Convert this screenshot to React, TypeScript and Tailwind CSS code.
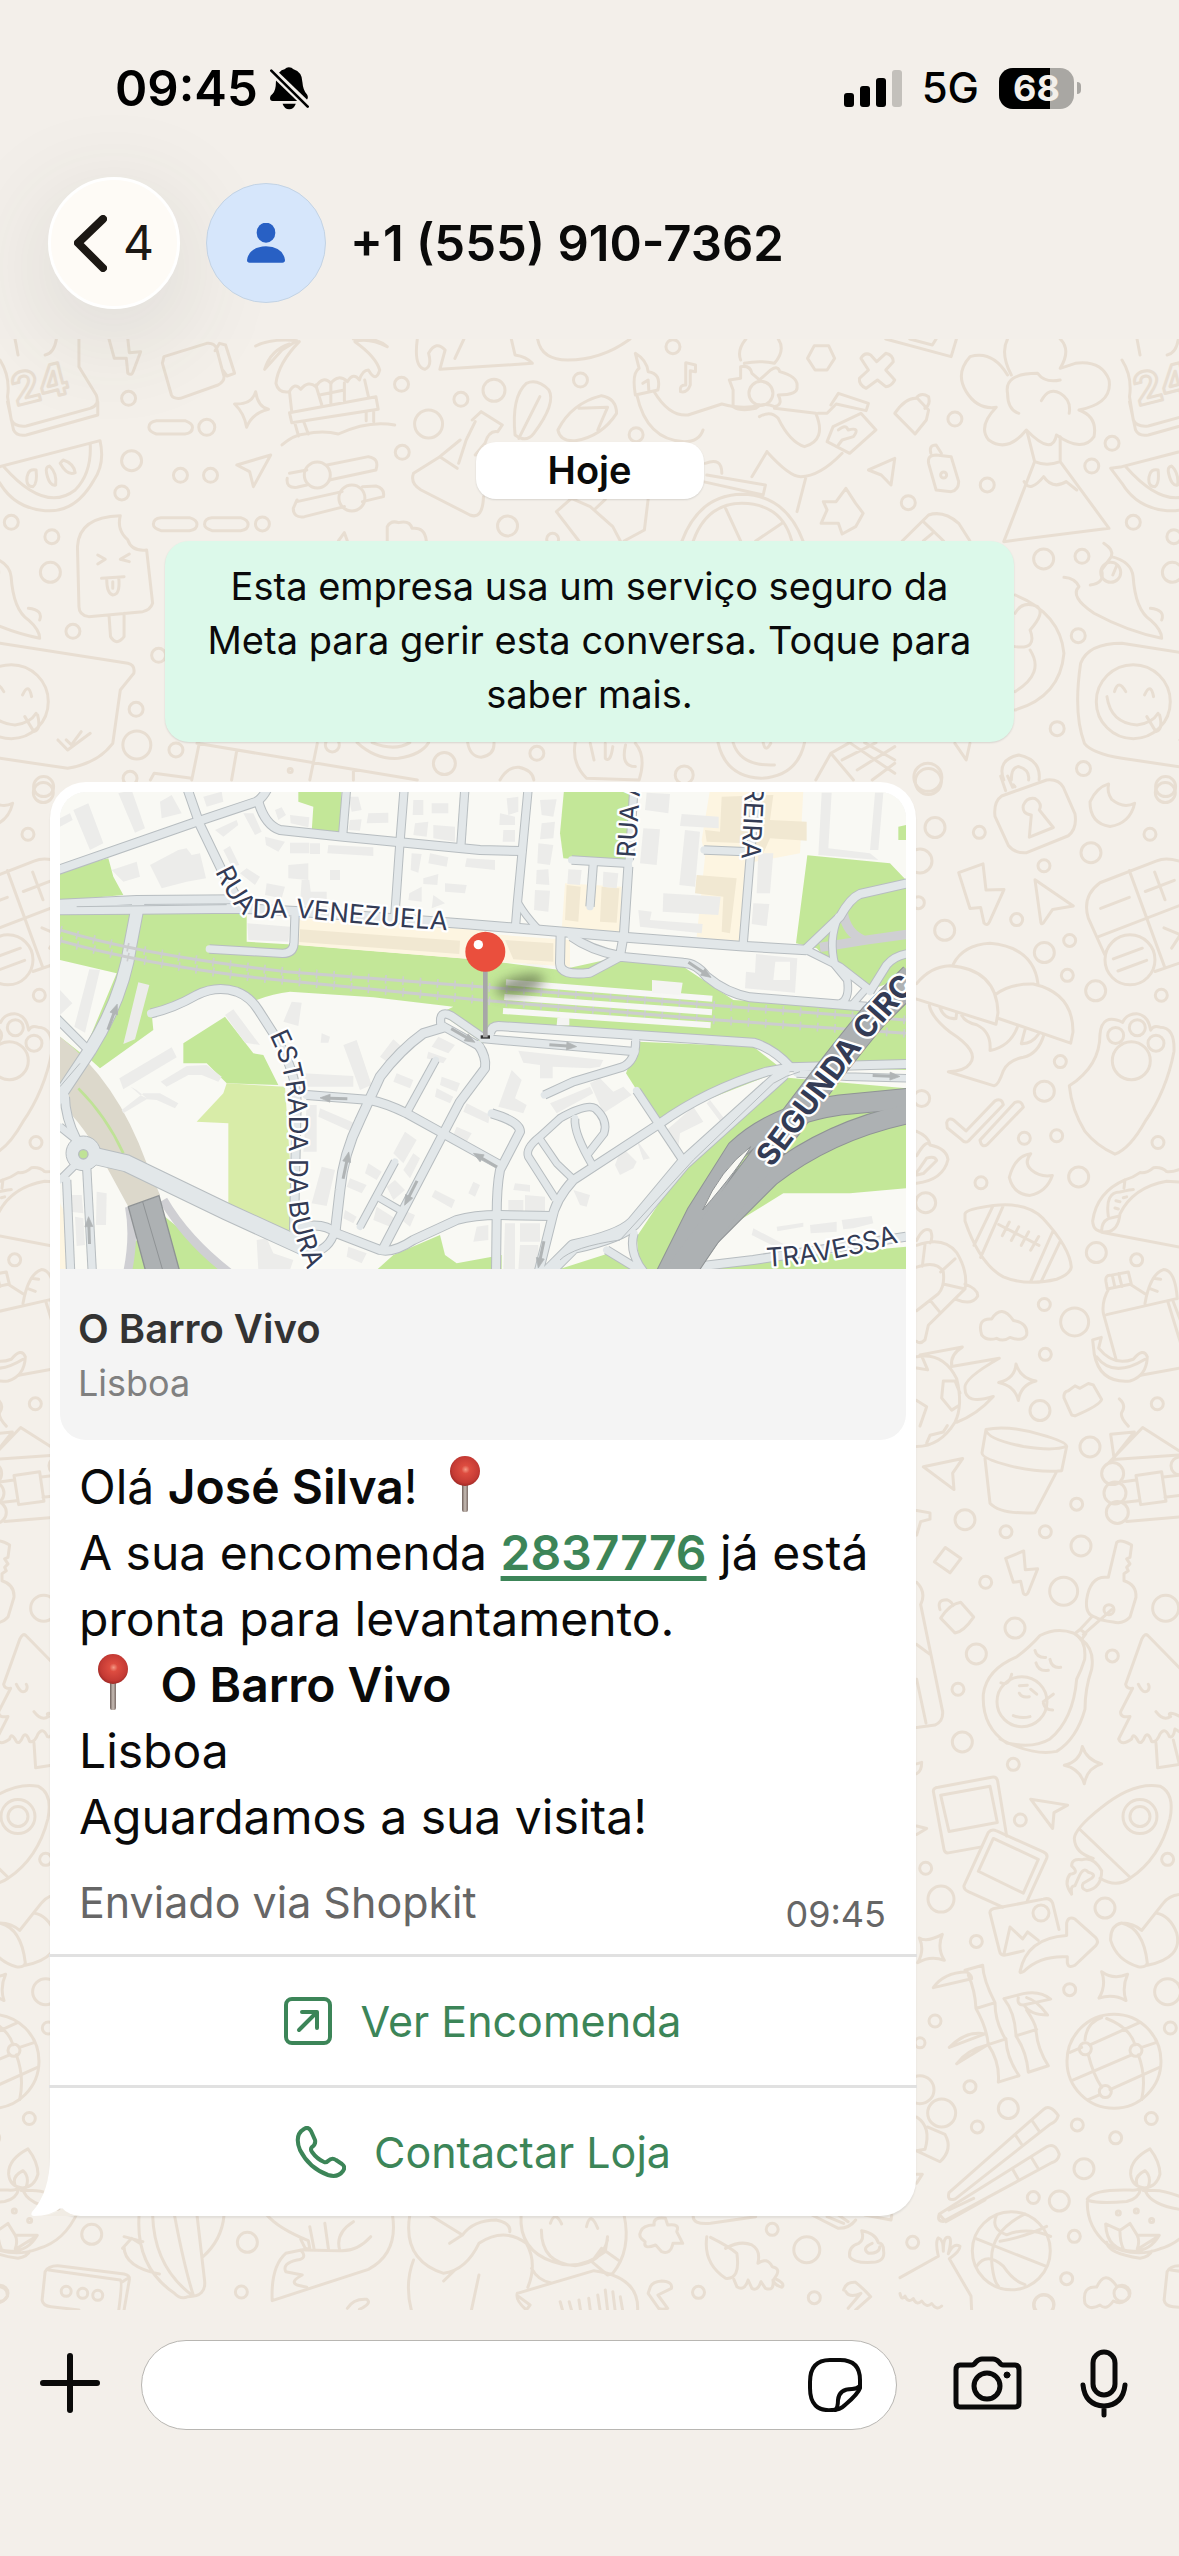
import React from "react";

type Dot = [number, number, number];

type PanelProps = {
  x: number;
  y: number;
  sx: number;
  sy: number;
  paths: string[];
  dots: Dot[];
};

/* One region of the wallpaper, drawn in its own coordinate grid. */
function Panel({ x, y, sx, sy, paths, dots }: PanelProps) {
  return (
    <g transform={`translate(${x} ${y}) scale(${sx} ${sy})`}>
      {paths.map((d) => (
        <path key={d} d={d} vectorEffect="non-scaling-stroke" />
      ))}
      {dots.map(([cx, cy, r]) => (
        <ellipse key={`${cx}-${cy}-${r}`} cx={cx} cy={cy} rx={r / sx} ry={r / sy} vectorEffect="non-scaling-stroke" />
      ))}
    </g>
  );
}

const topPaths = [
  "M105 27 V110 L128 195 Q133 225 120 235 L35 288 Q20 292 15 270 L10 200 Q14 140 0 90 M130 215 V255 L35 315 Q22 320 18 300 L10 215 M75 27 Q72 70 60 75 M20 27 L24 75",
  "M0 410 L133 332 Q140 400 125 450 Q100 550 60 542 Q20 535 0 460 L-15 415 L0 410 M120 342 Q122 430 100 480 Q60 550 5 410",
  "M36 440 Q38 415 48 420 Q50 460 44 470 Q34 470 36 440Z M62 430 Q66 470 74 465 Q76 430 66 408 Q60 410 62 430Z M80 400 Q90 440 100 428 Q98 400 84 390Z",
  "M145 27 L152 85 L168 85 L170 130 Q175 138 177 125 L187 65 L172 68 L170 27",
  "M218 80 L275 40 Q285 38 288 55 L298 140 Q298 155 290 165 L240 205 Q230 207 228 195 L216 100Z M286 62 L292 40 L300 45 L312 130 L302 138 L296 120",
  "M340 185 Q343 230 357 238 Q335 250 328 292 Q325 250 312 222 Q335 225 340 185Z",
  "M208 272 H246 Q256 280 256 292 Q256 310 246 312 H208 Q198 305 198 292 Q198 275 208 272Z M214 563 H252 Q262 570 262 583 Q262 600 252 602 H214 Q204 595 204 583 Q204 565 214 563Z M282 563 H320 Q330 570 330 583 Q330 600 320 602 H282 Q272 595 272 583 Q272 565 282 563Z",
  "M340 48 Q360 25 395 32 L375 60 L352 118 Q360 60 385 42 M470 27 Q500 20 515 50 Q490 22 472 35 Q500 80 505 120 Q500 160 490 120 Q482 120 478 150 Q470 125 462 155 Q450 130 440 160 Q430 135 420 170 Q410 150 400 178 Q392 155 385 185 Q370 190 367 160 Q370 100 398 35",
  "M385 185 L388 245 M385 248 L500 200 L503 238 L388 278Z M392 278 L397 318 M404 275 L410 312 M420 165 L428 225 M440 160 V218 M458 158 V212 M425 195 L458 180 M485 150 L490 200 M375 345 Q390 315 405 312 Q430 300 450 312 Q490 270 525 285 M487 245 V272 M497 240 V275",
  "M555 27 Q550 110 565 118 Q575 110 570 70 Q580 30 592 60 L585 118 L708 100 Q700 80 685 75 L680 27 M617 27 L605 85",
  "M715 27 Q720 90 755 90 Q800 90 838 27",
  "M685 315 Q680 200 700 160 Q715 145 730 180 Q740 220 710 310 Q700 340 685 315Z M718 200 L690 325 M742 300 Q760 220 800 197 Q820 205 820 250 Q800 320 765 332 Q745 335 742 300Z M770 235 L808 232 L795 300",
  "M845 70 Q860 90 862 125 Q880 130 875 180 L845 195 Q840 130 850 115Z M855 160 L862 150 L863 185 M847 195 Q860 330 910 335 Q930 335 935 300 M870 185 Q890 260 915 255 L960 222 Q990 240 1010 225 M1030 235 L1085 250 Q1100 330 1070 350 Q1050 335 1035 265 Q1025 240 1010 260",
  "M912 165 V98 L925 105 V125 L918 122 V165 Q914 190 905 185 Q903 165 912 165",
  "M975 180 L970 150 L985 145 L985 110 Q998 105 1000 130 L1010 150 L1025 120 Q1035 105 1037 125 Q1062 140 1060 170 Q1062 195 1035 195 Q1042 225 1030 230 Q1015 215 1005 235 Q985 245 975 230Z M985 90 Q980 60 992 27 M1035 27 Q1045 60 1030 100 Q1010 90 990 100",
  "M1083 47 H1102 L1110 85 L1100 120 H1084 L1074 85Z",
  "M1145 85 Q1150 65 1158 75 L1166 95 L1178 70 Q1188 75 1188 95 L1178 120 L1190 150 Q1185 170 1178 170 L1167 150 L1152 175 Q1142 165 1143 145 L1155 120Z",
  "M1178 27 L1265 80 L1272 27 M1210 27 L1240 45 L1245 27",
  "M1340 135 Q1320 60 1290 80 Q1270 130 1285 185 Q1300 240 1325 232 Q1300 290 1315 330 Q1340 370 1365 300 Q1400 380 1405 315 Q1440 370 1455 320 Q1460 260 1435 240 Q1480 220 1475 150 Q1465 90 1430 100 L1410 115 Q1425 60 1410 27 M1340 27 Q1330 70 1345 135 M1410 150 Q1390 160 1380 130 Q1335 130 1340 190 Q1340 240 1355 250 M1385 212 Q1395 170 1410 190 Q1425 210 1422 250",
  "M1366 305 L1376 395 L1335 635 L1475 595 L1410 395 V320 M1376 395 Q1392 410 1410 395 M1362 455 Q1370 490 1388 440 Q1400 480 1418 455 L1432 480",
  "M1105 225 L1115 190 L1155 220 L1152 242 L1112 222 L1100 250 L1088 250 M1100 335 L1108 290 L1145 250 L1165 300 L1130 370 L1100 335 M1115 300 Q1125 280 1128 300 Q1145 290 1135 320 L1120 330 L1115 345",
  "M1190 250 Q1205 200 1220 205 L1235 240 L1232 270 L1217 312Z M1218 205 Q1225 185 1235 200 Q1238 225 1230 235",
  "M1155 420 L1190 385 L1185 465 L1172 435Z M1238 370 Q1235 345 1245 345 L1252 370 M1235 400 Q1233 375 1245 375 L1265 380 L1275 455 Q1275 480 1265 485 L1245 480Z",
  "M315 405 L360 375 L337 470 L332 425Z",
  "M385 430 L408 420 M435 405 L490 380 Q505 385 500 420 L438 450 M408 465 L395 472 Q380 475 382 445 M395 515 L455 485 M482 470 L500 468 Q512 475 510 500 L482 515 M458 530 L405 560 Q390 565 390 535 L395 510",
  "M628 270 L640 245 L668 285 L662 305 Q650 300 645 340 L632 375 M632 275 L620 330 L610 400 M585 380 L612 330 M585 380 L550 430 Q545 460 560 480 L625 555 Q642 570 643 500 M585 380 L608 415",
  "M740 545 L760 505 L785 530 L815 590 L825 633 M740 545 L770 633 M862 508 L857 600 L830 633 M790 540 L805 508",
  "M907 633 Q930 495 987 493 Q1045 495 1068 633 M922 633 Q940 520 987 520 Q1040 522 1053 633 M965 535 L985 633 M1040 580 L1005 633 M940 435 L1018 465 L1015 495 L935 455 M938 400 Q960 380 960 430 M1020 365 L1000 440 M1020 365 Q1050 440 1065 440 Q1090 440 1120 370 M1072 440 L1060 545",
  "M1092 580 L1100 540 L1095 515 L1112 515 L1125 475 L1138 520 L1148 550 L1138 590 L1120 612 L1115 580Z",
  "M1200 633 L1235 555 Q1255 540 1275 580 L1290 633 M1228 575 L1255 633 M1228 633 L1240 610",
  "M515 633 V590 Q520 570 530 578 Q545 570 548 595 Q565 590 567 633 M450 633 L458 608 L462 633",
  "M105 830 L103 650 Q105 560 160 557 Q155 600 170 630 Q175 665 195 660 L203 820 Q200 840 190 845 L118 860 Q105 855 105 830Z M145 857 L147 920 Q155 950 165 920 V850 M130 675 L140 688 L130 702 M172 672 L160 688 L172 695 M135 745 L165 740 M142 750 Q142 790 150 795 Q160 795 158 745 M150 755 V775",
  "M0 940 L170 1000 Q180 1005 178 1030 L160 1080 L150 1240 Q130 1300 90 1315 L0 1285 Q-40 1270 -50 1240 Q-65 1150 -55 1000 Q-45 940 0 940Z",
  "M-20 1100 Q-15 1180 20 1185 Q40 1180 48 1150 M-10 1085 Q-5 1045 5 1085 M30 1095 Q38 1055 42 1100 M33 1160 L45 1205 Q55 1200 50 1155",
  "M77 1230 L90 1260 L120 1210 M88 1230 L95 1245 L108 1205",
  "M1468 640 Q1482 660 1478 680 Q1505 695 1507 740 Q1510 840 1530 870 Q1545 900 1545 925 Q1500 905 1455 850 Q1422 800 1435 770 Q1430 745 1415 742 M1450 765 Q1470 760 1465 720 Q1475 690 1478 680 M1480 735 L1485 708 M1530 835 Q1550 840 1545 870",
  "M1350 795 Q1410 850 1415 970 Q1410 1100 1350 1140 M1350 950 Q1380 960 1370 900 Q1390 850 1380 830 Q1360 810 1350 850 M1370 960 Q1390 1030 1350 1085",
  "M262 1240 L555 1350 M265 1240 L255 1350 M315 1260 L308 1350 M422 1240 L412 1350 M470 1320 V1350 M200 1350 L205 1330 L255 1345 M475 1238 Q500 1290 530 1285 Q560 1275 570 1238 M495 1238 Q525 1265 545 1238",
  "M622 1238 Q625 1280 640 1282 Q658 1275 657 1238 M765 1238 Q760 1300 780 1345 L850 1350 Q860 1280 845 1240 M785 1240 L790 1290 M805 1240 V1285 Q812 1300 815 1250 M832 1245 Q825 1310 845 1310",
  "M955 1238 Q965 1340 1012 1345 Q1060 1340 1070 1238 M975 1238 Q985 1310 1030 1305 M1015 1238 Q1018 1270 1025 1240 M1085 1350 L1105 1270 L1135 1350 M1105 1270 L1130 1238 L1190 1330 M1120 1290 L1165 1238 M1140 1320 L1190 1250 M1160 1350 L1190 1300 M1150 1238 L1190 1290",
  "M1270 1240 L1285 1290 L1290 1240 M1335 1350 Q1325 1290 1355 1275 Q1385 1290 1382 1350 M1345 1350 Q1345 1310 1355 1310 Q1370 1320 1368 1350 M665 1350 Q675 1310 690 1312 Q708 1320 710 1350",
];

const topDots: Dot[] = [
  [171, 205, 7], [275, 292, 8], [175, 392, 10], [240, 436, 7], [280, 436, 7], [162, 489, 7], [349, 582, 7],
  [534, 163, 7], [613, 208, 7], [657, 181, 11], [570, 282, 14], [535, 367, 7], [772, 150, 7], [846, 314, 7],
  [895, 50, 7], [1270, 267, 7], [1012, 190, 12], [675, 588, 10], [1208, 518, 7], [1313, 465, 7], [1452, 408, 7],
  [1479, 340, 7], [1388, 687, 10], [1439, 679, 7], [69, 620, 7], [67, 727, 10], [97, 904, 7], [211, 976, 7],
  [181, 1138, 7], [182, 1245, 14], [234, 1260, 7], [173, 1345, 7], [58, 1370, 10], [15, 577, 7], [591, 1301, 11],
  [714, 1270, 7], [442, 1245, 7], [910, 1335, 9], [1234, 1342, 14], [1406, 1196, 7], [1441, 1316, 7], [1434, 917, 7],
  [15, 1115, 37], [422, 435, 13], [468, 504, 13], [1255, 435, 3], [386, 1322, 2], [735, 628, 6], [-15, 727, 10],
];

const rightUpperPaths = [
  "M302 -8 L317 22 M323 -8 L338 15 M340 10 L345 14 M285 75 Q280 45 305 33 L440 0 Q475 -3 490 15 L525 70 Q532 100 505 115 L380 150 Q345 152 325 135Z M388 118 L394 72 Q365 70 370 52 Q380 35 405 38 Q428 48 418 62 L460 98Z",
  "M626 8 Q590 15 570 45 Q570 90 630 96 Q690 90 704 48 Q670 60 635 40 Q620 25 626 8Z",
  "M176 191 L249 173 L258 227 L312 226 L268 293 Q262 302 252 295 L242 263 L210 265Z",
  "M405 206 L520 260 L458 267 L430 295 Q422 300 422 290Z",
  "M614 360 L565 285 Q545 240 600 212 L770 167 Q800 158 850 170 M596 323 L850 256 M688 187 L793 384 M765 395 L850 375 M602 265 L688 242 M736 230 L823 207 M764 190 L795 247 M792 305 L850 322 M815 347 L850 310 M640 369 L727 347 M654 394 L740 372",
  "M50 420 Q90 385 150 383 Q290 390 294 480 L288 504 L50 452 M160 380 Q190 340 270 337 Q400 345 414 420 M288 442 Q330 420 400 421 Q520 440 519 520 L512 543 L296 492 M88 465 Q95 490 150 520 Q240 560 210 585 Q195 600 145 602 L283 631 Q295 630 310 600 Q325 578 370 572 Q415 565 432 525 M120 470 Q135 495 168 492 L170 480 M185 485 Q195 500 230 505 Q275 520 270 558 Q330 550 352 510 M375 515 L364 544 Q395 545 415 525",
  "M508 631 Q515 680 555 725 Q590 755 645 772 Q690 760 735 705 Q800 640 822 560 Q825 510 780 510 Q760 505 752 516 Q745 485 710 482 Q680 482 668 500 Q605 480 600 525 Q600 590 508 631Z",
  "M140 707 Q145 695 162 702 L198 724 L285 662 Q305 655 310 670 L205 745 Q195 750 185 742 L142 718Z M240 743 L345 665 Q365 660 370 675 L262 752 Q245 760 240 743Z",
  "M392 771 Q345 775 328 820 Q340 855 390 857 Q440 850 457 816 Q420 820 395 805 Q370 790 392 771Z",
  "M195 895 Q200 885 280 878 Q380 870 430 905 Q510 965 514 1005 Q510 1020 470 1030 Q380 1045 310 1025 Q240 1000 195 910Z M278 880 L222 960 M310 878 L242 985 M458 932 L392 1035 M480 953 L425 1033 M296 917 L417 960 M328 912 L307 940 M356 922 L334 950 M386 932 L364 960 M416 942 L392 970",
  "M50 775 Q80 740 90 753 Q140 760 144 783 Q130 825 50 832 M50 810 L80 780 Q105 775 110 785 L70 812 L50 815 M50 725 Q85 735 90 752",
  "M50 950 Q70 920 92 930 Q100 945 90 955 M50 960 Q130 940 170 975 Q205 1015 195 1050 L85 1125 L75 1155 Q60 1165 50 1158 M50 1005 Q110 990 130 1015 Q135 1045 115 1060 L50 1095 M75 958 L67 1003 M165 988 L122 1015 M130 1040 L195 1050 M90 1073 L122 1100 M195 1040 Q235 1050 233 1065 Q215 1085 170 1072",
  "M245 1145 Q230 1110 275 1112 Q305 1080 340 1115 Q385 1120 380 1145 Q370 1160 330 1150 Q310 1160 290 1152 Q260 1158 245 1145Z",
  "M578 910 Q590 850 675 825 Q700 820 720 810 Q740 812 760 800 Q785 798 800 808 Q820 810 850 800 M578 910 Q580 935 620 932 Q655 930 660 895 Q700 840 800 828 L850 830 M605 933 L850 965 M625 900 Q615 850 660 850 Q695 845 700 845 M675 825 L672 842 M648 868 L660 870 M645 883 L655 885 M670 862 L680 860 M625 905 Q605 912 605 930 M625 905 L655 900",
  "M618 1035 Q615 1022 630 1022 L685 1015 L694 1040 L622 1050Z M637 1022 L645 1047 M656 1018 L666 1045 M626 1050 Q605 1075 610 1100 L648 1195 M694 1042 L735 1060 M620 1103 L830 1070 M735 1080 Q750 1020 790 1010 Q825 1010 832 1070 M760 1028 L782 1030 M752 1050 L772 1055 M803 1075 L850 1180 M818 1073 L850 1130 M722 1228 L850 1212",
  "M578 1155 L604 1150 L596 1172 Q640 1210 700 1195 Q730 1170 742 1190 Q740 1230 690 1240 Q600 1245 583 1185Z M590 1190 Q640 1235 735 1195",
  "M348 1205 Q362 1235 408 1240 Q362 1248 355 1280 Q345 1250 296 1243 Q345 1235 348 1205Z",
  "M492 1275 Q490 1262 505 1260 L525 1250 L540 1255 L565 1245 L580 1248 L605 1278 Q600 1290 525 1312 L515 1310Z",
  "M50 1190 Q130 1180 170 1235 Q190 1290 165 1325 Q120 1375 50 1375 M65 1188 L83 1217 L50 1213 M130 1240 H165 L180 1265 M130 1240 L125 1275 L155 1300 L178 1290 M50 1280 L80 1293 L60 1333 M80 1368 L90 1352 L130 1345 L142 1332 M60 1186 L187 1170 Q150 1185 155 1210 L298 1193 Q190 1235 195 1255 Q195 1290 280 1272 Q230 1310 170 1325",
  "M258 1340 Q320 1330 420 1350 Q500 1365 500 1375 L485 1425 Q420 1430 330 1415 Q245 1400 246 1388Z M258 1340 Q260 1360 370 1375 Q460 1385 500 1375 M255 1400 L270 1492 Q300 1515 405 1512 Q430 1480 470 1427",
  "M658 1277 Q680 1290 665 1305 Q660 1315 685 1333 M632 1350 L703 1345 L642 1398Z M627 1408 L728 1336 L840 1385 M640 1402 L850 1392 M708 1435 L785 1427 L798 1488 L722 1495Z M670 1448 L708 1444 M675 1490 L715 1487 M790 1438 L840 1434 M795 1480 L840 1476 M680 1530 L850 1520",
  "M70 1417 L188 1400 L158 1430 L162 1464Z M50 1507 L90 1512 V1525 L62 1530 L50 1558",
];

const rightUpperDots: Dot[] = [
  [85, 3, 13], [105, 98, 10], [238, 108, 6], [60, 167, 12], [432, 177, 6], [573, 150, 10], [796, 26, 10], [750, 112, 6],
  [350, 288, 6], [134, 310, 10], [433, 356, 10], [509, 331, 6], [502, 403, 6], [587, 435, 10], [784, 444, 6],
  [690, 371, 25], [481, 581, 6], [433, 642, 10], [470, 734, 6], [373, 739, 6], [774, 748, 6], [647, 527, 8],
  [712, 511, 8], [768, 543, 8], [694, 579, 19], [243, 831, 6], [536, 819, 10], [77, 872, 10], [589, 975, 10],
  [710, 990, 6], [433, 1082, 6], [524, 1118, 14], [436, 1185, 6], [420, 1301, 10], [772, 1287, 6], [570, 1376, 10],
  [638, 1431, 11], [645, 1471, 11], [652, 1511, 11], [840, 1415, 9], [530, 1494, 6], [195, 1526, 10], [318, 1551, 6],
  [436, 1551, 6], [65, 657, 8], [55, 253, 6],
];

const rightLowerPaths = [
  "M103 44 L136 15 L183 37 L150 66Z M122 157 Q150 128 182 125 L221 155 Q190 185 165 187Z M120 140 Q110 120 140 120 Q158 125 158 132",
  "M317 37 L371 22 L376 60 L413 58 L385 105 Q378 114 370 107 L362 83 L340 85Z",
  "M625 75 L650 5 Q660 -3 695 10 L690 35 L680 38 L690 48 L680 55 L685 62 L672 68 L672 82 Q710 90 708 115 L690 155 Q670 170 640 165 Q600 162 585 155 Q555 150 560 120 Q570 75 615 75 L625 75 M635 140 L550 190 M575 155 L540 180 M525 188 L540 180 L558 188 L545 200Z",
  "M250 310 Q260 260 350 235 Q390 215 420 192 Q470 175 520 187 Q560 200 554 240 Q545 260 530 280 Q520 360 450 400 Q400 420 320 408 Q245 375 250 310Z M545 200 Q585 220 575 260 Q555 300 555 340 Q530 400 470 425 Q400 435 300 400",
  "M405 222 Q410 237 437 236 M450 240 Q455 258 482 256 M408 247 Q415 265 445 262 M303 287 Q325 295 335 270 M430 325 L460 310 M430 328 Q435 342 458 342 M358 293 L382 292 M392 300 L410 310 M358 308 Q365 318 388 315 M340 353 Q365 360 390 355",
  "M850 265 L745 193 Q735 185 725 200 L677 290 Q680 300 698 298 L662 345 Q660 358 690 355 L656 400 Q665 415 695 400 Q700 385 715 405 Q725 412 735 395 Q745 385 755 405 Q770 408 780 390 Q795 375 808 395 Q820 400 825 380 L850 390 M715 290 Q730 312 745 302 Q750 295 745 290 M768 345 Q790 365 812 355 Q800 345 825 350 L850 358 M768 408 L773 458 L850 450 M820 402 L838 450",
  "M547 415 Q560 442 605 450 Q562 458 553 490 Q540 460 493 453 Q540 445 547 415Z",
  "M100 505 Q100 498 115 497 L275 477 Q290 475 293 485 L320 595 M100 505 L132 622 Q135 630 145 629 L245 617 M122 513 L270 495 L292 568 L147 586Z",
  "M265 588 Q275 580 290 585 L430 627 Q445 632 440 640 L382 725 M265 588 L192 695 Q190 702 205 707 L308 738 M280 600 L415 642 L370 710 L235 666Z",
  "M270 750 Q268 742 290 740 L430 722 Q450 718 458 730 L477 783 M270 750 L298 825 Q300 837 320 834 L370 826 M312 832 L330 778 L368 802 L383 788 L415 805",
  "M360 868 Q380 800 500 795 V770 Q505 755 525 762 L588 800 Q597 807 588 815 L525 855 Q505 862 502 850 V838 Q420 835 372 867 Q360 872 360 868Z",
  "M392 521 L503 533 L462 548 L458 580Z",
  "M523 600 Q525 580 600 540 Q700 485 780 495 Q825 510 810 560 Q780 640 690 680 Q650 700 600 680 M540 582 L690 678 M523 600 Q525 630 580 640 M515 712 Q490 690 510 672 Q540 670 515 655 Q515 640 545 643 Q580 635 605 665 Q605 700 560 705 Q540 700 550 690 L575 680 Q590 672 565 668 Q550 655 535 680 L525 695 Q510 695 515 712",
  "M632 805 Q630 775 665 770 Q730 780 742 850 Q740 860 715 858 Q650 845 632 805Z M665 770 Q700 770 725 785 L790 730 Q810 712 850 712 M742 855 Q850 840 830 790 Q810 755 768 750",
  "M58 800 Q80 810 127 793 Q110 820 133 845 Q90 835 53 850 Q75 825 58 800Z M605 868 Q640 885 683 873 Q665 900 678 926 Q640 912 597 921 Q620 895 605 868Z",
  "M100 900 Q130 870 200 868 Q215 875 215 882 L100 900 M195 865 L248 855 Q250 885 285 930 Q285 970 318 1005 Q320 1040 357 1077 L295 1090 Q300 1050 265 1015 Q260 980 228 942 Q225 905 205 875 M228 942 L285 930 M262 1015 L318 1003 M148 1020 Q200 985 255 993 M148 1020 L255 993 M170 1053 Q200 1025 262 1015 M170 1053 L262 1015",
  "M312 922 L370 912 Q420 905 452 923 L370 935 Q350 935 355 920 M372 935 Q390 955 443 955 Q410 925 380 920 M312 922 Q345 950 348 997 Q380 1030 385 1070 L445 1057 Q410 1020 408 983 Q405 970 380 945 M348 997 L410 984",
  "M545 1020 L510 1030 M555 1005 Q560 970 605 960 M570 1015 L720 970 M620 962 Q690 980 705 1015 M725 1020 L770 1010 M565 1035 Q580 1075 605 1100 M515 1087 L695 1035 M715 1035 Q740 1080 725 1125 M565 1125 L600 1115 M630 1105 L780 1060",
  "M147 1312 L430 1145 Q450 1133 475 1157 Q470 1170 450 1175 L165 1325 Q140 1330 147 1312Z M345 1195 L365 1215 M397 1168 L417 1188 M118 1355 L440 1220 Q465 1210 478 1235 Q475 1248 455 1252 L130 1370 Q110 1370 118 1355Z M338 1265 L355 1285 M393 1240 L413 1262",
  "M50 1160 Q95 1180 75 1225 L50 1228 M82 1180 L135 1195 Q160 1225 120 1250 L50 1228 M50 1275 L67 1275 L50 1293",
  "M50 85 Q80 105 62 130 L128 345 Q130 365 105 372 L50 377 M50 210 L90 230 M50 280 L78 368 M50 450 L65 447 Q65 465 50 470 M50 575 L80 580 L50 592",
  "M290 1357 Q270 1385 320 1397 Q380 1380 452 1400 M375 1355 Q270 1390 275 1450 Q280 1490 295 1500 M230 1405 L437 1460 M230 1460 Q260 1430 310 1460 Q340 1490 375 1497 M300 1410 Q380 1400 440 1380",
  "M692 1275 Q690 1245 750 1224 Q780 1250 780 1275 Q770 1300 735 1303 Q695 1300 692 1275Z M712 1298 Q700 1280 735 1268 Q755 1280 745 1300 M562 1325 Q580 1305 690 1307 Q715 1308 720 1303 M565 1328 Q600 1335 680 1330 Q715 1325 722 1305 M562 1330 Q560 1380 620 1415 Q700 1445 780 1425 Q860 1410 900 1350 M737 1310 Q760 1345 900 1350 M730 1308 L755 1308 Q800 1305 890 1335 M620 1412 Q625 1435 720 1444 Q750 1440 755 1430 M617 1375 L660 1388 L690 1374 L712 1398 L778 1398 Q750 1430 700 1430 Q620 1430 617 1375Z M660 1390 Q660 1410 670 1425 M712 1398 Q720 1410 712 1425 M715 1425 L775 1400",
  "M0 1483 L115 1440 Q105 1410 115 1403 Q130 1405 130 1430 Q130 1400 145 1402 Q158 1402 145 1435 Q160 1412 180 1420 Q180 1430 148 1445 L213 1520 L215 1550 M0 1515 Q5 1530 15 1520 Q25 1535 40 1525 Q50 1540 65 1530 Q80 1545 95 1535 Q110 1550 125 1540",
  "M555 1535 Q545 1500 590 1502 Q615 1465 650 1500 Q690 1500 688 1520 Q670 1540 640 1530 Q620 1550 600 1538 Q570 1550 555 1535Z",
];

const rightLowerDots: Dot[] = [
  [543, 12, 10], [257, 85, 6], [491, 103, 14], [797, 137, 13], [345, 177, 10], [229, 229, 10], [637, 233, 6],
  [174, 300, 6], [187, 406, 10], [340, 451, 6], [627, 140, 5], [366, 325, 25], [361, 563, 6], [77, 660, 6],
  [803, 642, 6], [720, 556, 17], [720, 556, 10], [615, 740, 10], [123, 722, 13], [423, 750, 8], [229, 807, 6],
  [509, 904, 6], [803, 908, 13], [811, 981, 6], [105, 967, 6], [642, 1048, 47], [556, 1023, 6], [708, 1026, 6],
  [616, 1109, 6], [210, 1099, 6], [325, 1143, 10], [125, 1152, 14], [232, 1180, 6], [532, 1176, 6], [754, 1163, 6],
  [647, 1202, 6], [552, 1264, 10], [400, 1322, 6], [478, 1329, 10], [523, 1400, 6], [334, 1429, 39], [38, 1412, 6],
  [500, 1485, 6], [432, 1537, 10], [60, 1105, 14], [60, 1011, 5], [655, 1353, 2], [709, 1349, 2], [755, 1368, 2],
];

const bottomPaths = [
  "M60 215 Q65 195 80 198 L165 222 Q173 226 172 240 L165 330 M60 215 L56 300 Q57 318 68 320 L105 330 M65 210 L160 240 Q163 245 158 330 M163 245 L172 232",
  "M185 45 Q180 200 232 280 Q240 300 250 290 Q275 290 272 240 L262 45 M203 45 Q205 200 255 285 M232 45 Q245 200 257 285 M298 45 Q295 120 270 170 M163 145 L175 115 L186 130 M165 110 L190 125 M165 140 Q165 200 212 222",
  "M355 45 Q370 85 410 122 L412 145 L380 160 Q360 200 362 302 L490 208 Q530 160 522 45 M400 118 L406 145 M412 80 L418 150 M432 70 L437 150 M470 65 Q445 100 452 152 Q475 155 493 110 M405 150 L452 152 M400 150 Q410 175 395 180 Q375 190 380 215 L402 225 Q385 245 395 255 L408 262",
  "M545 45 Q535 180 590 220 Q620 210 637 130 Q670 80 700 130 Q715 190 702 262 M572 45 L615 105 L598 130 M615 105 Q630 60 660 60 Q680 70 678 95 M550 180 Q538 250 547 330 M590 243 L605 210 M637 225 L627 330 M707 205 Q715 240 732 248",
  "M693 45 Q690 150 735 185 Q770 215 805 155 L808 110 M720 90 Q720 190 765 197 Q800 190 808 120 M830 45 Q840 150 815 220 L808 225 L787 185 L800 145 L822 180 M732 70 Q738 30 747 72 M780 80 Q785 30 795 85",
  "M688 280 L790 212 Q850 230 848 330 M688 280 Q685 300 700 330 L705 315 L690 290 M745 305 L748 330 M757 305 L760 330 M770 300 L772 330 M783 295 L785 330 M795 285 L798 330 M805 270 L808 330 M815 275 L818 330 M825 290 L828 330",
  "M852 95 Q855 75 870 75 Q868 50 885 55 L888 75 Q905 70 900 95 L908 130 L895 130 Q892 165 880 155 L872 135 Q855 150 858 125 Q848 110 852 95Z",
  "M940 110 Q935 190 965 235 Q985 240 980 160 Q970 140 945 112 M965 145 Q985 120 1000 135 Q1012 150 1008 190 Q1020 170 1027 200 Q1040 205 1030 235 Q1045 250 1040 262 Q1030 255 1028 240 Q1030 275 1018 265 L1012 245 Q1008 275 1000 265 L995 240 Q990 275 980 260 L976 238",
  "M922 45 Q920 75 945 70 L1005 50 M1080 45 L1115 85 Q1130 85 1138 60 M1100 50 L1122 70 M1115 45 L1128 65 M1150 45 L1185 60 L1186 45",
  "M1146 92 Q1150 120 1142 130 Q1128 140 1130 170 Q1135 190 1160 187 Q1178 185 1175 150 Q1175 130 1168 128 Q1165 100 1146 92Z M1160 130 Q1145 145 1155 160 Q1170 160 1170 140",
  "M865 260 Q868 245 880 243 Q895 245 893 265 L875 285 L888 325 Q880 330 876 325 L862 280Z M1122 270 Q1125 245 1138 247 Q1148 265 1158 290 L1138 330 M1125 275 Q1130 295 1145 280 L1128 325",
  "M462 325 Q470 295 488 298 Q495 310 478 328",
  "M1250 45 L1258 65 L1310 0 M1262 30 L1295 -5",
];

const bottomDots: Dot[] = [
  [122, 103, 10], [329, 127, 10], [321, 276, 6], [88, 274, 5], [110, 280, 5], [130, 286, 5], [1073, 149, 13],
  [1027, 88, 6], [929, 277, 6], [1083, 293, 6], [0, 280, 8], [1388, 315, 10],
];

function WallpaperTile() {
  return (
    <>
      <Panel x={0} y={330} sx={0.7519} sy={0.3333} paths={topPaths} dots={topDots} />
      <Panel x={900} y={780} sx={0.3333} sy={0.4847} paths={rightUpperPaths} dots={rightUpperDots} />
      <Panel x={900} y={1540} sx={0.3333} sy={0.4974} paths={rightLowerPaths} dots={rightLowerDots} />
      <Panel x={0} y={2200} sx={0.7519} sy={0.3333} paths={bottomPaths} dots={bottomDots} />
    </>
  );
}

function Wallpaper() {
  return (
    <svg
      aria-hidden="true"
      viewBox="0 339 1179 1971"
      preserveAspectRatio="xMidYMin slice"
      className="absolute inset-0 h-full w-full"
      fill="none"
      stroke="#e8ded2"
      strokeWidth="3"
      strokeLinecap="round"
      strokeLinejoin="round"
    >
      <WallpaperTile />
      <g transform="translate(-1122 0)">
        <WallpaperTile />
      </g>
      <g transform="translate(1122 0)">
        <WallpaperTile />
      </g>
      <g className="font-['Inter'] text-[44px] font-bold">
        <text x="16" y="406" transform="rotate(-14 16 406)">24</text>
        <text x="1138" y="406" transform="rotate(-14 1138 406)">24</text>
      </g>
    </svg>
  );
}

/* Map data */

const parks = [
  "M60 430 H620 V515 L780 525 L1330 570 L1560 600 L1740 560 L1930 590 L2080 690 L2480 715 L2598 640 V900 L2250 890 L2140 818 L1370 768 L1330 820 L1200 730 L1240 710 L1000 682 L750 665 Q700 670 650 690 L590 665 L480 670 L335 730 L340 780 L180 895 L130 850 L230 610 L60 570Z",
  "M60 300 L205 265 L220 320 L250 375 L60 392Z",
  "M775 60 H905 L900 190 L815 185 L820 110 L775 95Z",
  "M1572 60 H1780 L1765 280 L1570 265 L1560 190Z",
  "M430 820 L555 740 L640 850 L670 855 L715 945 L560 940 L500 880 L430 880Z",
  "M1795 815 L2140 830 L2230 900 L1858 1045 L1790 960 L1758 910Z",
  "M2302 256 L2550 280 L2598 330 V620 L2490 660 L2390 600 L2330 535 L2268 520Z",
  "M2575 170 L2598 165 V210 H2575Z",
  "M2598 955 V1255 L2430 1270 H2230 L2100 1350 L1920 1500 H1800 L1790 1400 L1930 1190 L2210 920Z",
  "M375 1340 L570 1500 H275 L280 1420Z",
  "M1010 1500 L1060 1455 L1200 1395 L1215 1455 L1250 1480 L1385 1455 V1500Z",
  "M1550 1500 L1700 1452 L1800 1500Z",
  "M2000 1500 L2160 1470 L2598 1430 V1500Z",
  "M60 800 L130 855 L100 900 L60 860Z",
];

const creams = [
  "M775 445 L1330 480 L1325 570 L770 525Z",
  "M1320 490 L1590 510 L1590 590 L1320 572Z",
  "M1575 340 L1745 350 L1740 490 L1565 480Z",
  "M2010 60 H2290 L2280 250 L2120 280 L2100 520 L1970 500 L1995 260 L1985 210Z",
  "M60 1300 L75 1330 L80 1500 H60Z",
];

const tans = [
  "M780 478 L1260 512 L1258 552 L778 516Z",
  "M1395 510 L1540 520 V575 L1420 568Z",
  "M1580 345 L1622 350 L1615 455 L1575 450Z",
  "M1685 350 L1738 355 L1730 458 L1680 455Z",
  "M1995 180 L2040 185 L2045 80 L2200 75 L2190 150 L2300 155 V212 L2190 205 L2170 250 L2120 220 L2000 215Z",
  "M1970 315 L2090 325 L2070 490 L2045 485 L2050 380 L1965 370Z",
];

const buildings = [
  "M100 120 L145 100 L190 220 L150 240Z M60 145 L90 130 L98 150 L60 170Z M235 70 L275 60 L315 175 L285 188Z M360 95 L395 75 L425 130 L365 145Z M490 80 L545 65 L550 95 L500 110Z",
  "M330 285 L415 240 L440 235 L455 255 L480 250 L498 325 L440 335 L365 355Z M215 300 L290 275 L300 320 L250 335Z M550 240 L570 228 L598 285 L575 290Z M525 180 L590 150 L595 165 L550 200Z M610 130 L640 130 L665 185 L645 195Z",
  "M705 120 L725 112 L738 135 L715 150Z M750 135 L808 142 L805 172 L752 160Z M675 200 L735 215 L715 245 L678 225Z M750 218 H808 V250 H750Z M810 220 H840 V252 H810Z M865 225 L1000 232 V258 L862 250Z",
  "M745 285 L805 280 V330 L745 325Z M870 300 H900 V330 H870Z M680 340 L735 350 L725 385 L675 375Z M785 330 H808 L812 365 H860 V415 L780 405Z M600 310 L620 295 L660 320 L645 345Z",
  "M925 80 H955 L965 120 L935 125Z M985 130 L1045 128 V158 L980 160Z M930 150 L965 148 L960 182 L925 180Z M1120 90 H1150 V135 H1118Z M1125 160 L1165 155 L1160 200 L1120 195Z M1175 100 H1225 V130 H1175Z M1180 165 L1245 170 V215 L1180 205Z",
  "M1115 250 L1145 252 L1135 308 L1112 300Z M1170 250 L1225 262 L1220 290 L1165 280Z M1280 265 L1365 270 V300 L1275 290Z M1150 325 L1195 312 L1192 345 L1150 342Z M1215 340 L1280 345 L1275 370 L1215 365Z M1108 370 L1145 350 V395 L1105 390Z M1180 375 L1215 400 L1175 415Z",
  "M1400 85 L1435 80 V125 L1405 135Z M1380 130 L1425 140 V165 H1378Z M1390 180 H1425 V215 H1388Z M1500 90 L1550 88 L1540 140 L1505 135Z M1505 160 L1545 155 L1540 205 L1500 208Z M1495 220 L1540 225 L1530 285 L1492 280Z M1490 300 L1525 298 L1528 345 L1488 342Z M1485 360 L1530 362 L1525 425 L1482 420Z",
  "M1585 298 L1625 300 L1620 345 L1582 342Z M1690 305 L1735 310 L1730 355 L1688 350Z M1820 68 L1890 72 L1885 130 L1815 120Z M1925 132 L2036 140 V175 L1920 168Z M1810 175 L1860 178 L1850 285 L1800 280Z M1935 180 L1980 185 L1965 350 L1918 345Z M1870 370 L2042 380 L2035 435 L1868 425Z M1795 420 L1835 425 L1830 450 L1988 462 L1985 490 L1800 470Z",
  "M2155 250 H2200 L2190 370 H2150Z M2140 400 L2188 402 L2180 468 L2135 462Z M2345 68 H2375 L2365 235 L2490 250 L2515 270 L2335 255Z M2505 68 H2530 L2515 240 H2490Z M2148 552 L2272 565 L2265 668 L2115 655 L2118 605 L2145 608Z M2206 575 H2250 V630 H2200Z",
  "M622 460 L750 470 L745 515 L625 510Z M148 598 L180 600 L135 788 L103 770Z M295 637 L328 645 L285 808 L250 822Z M60 660 L97 700 L60 735Z M238 925 L395 832 L410 862 L250 958Z M362 935 L440 888 L500 885 L545 920 L535 935 L485 915 L445 915 L380 950Z M245 1020 L310 970 L360 970 L415 1000 L405 1015 L350 990 L320 988 L250 1030Z M272 950 L300 975 L320 985 L290 960Z",
  "M555 735 L580 718 L660 825 L615 818Z M755 695 L785 698 L775 768 L730 755Z M910 825 L950 810 L995 945 L960 960Z M845 790 L870 800 L865 818 H842Z M790 910 L940 918 V950 H795Z M800 1005 H830 V1145 H790Z M840 1015 L945 1060 L935 1085 L835 1040Z M845 1190 L885 1200 L860 1308 L815 1300Z",
  "M1020 860 L1060 808 L1085 830 L1045 878Z M1070 910 L1120 930 L1110 955 L1060 935Z M1175 830 L1195 800 L1245 825 L1225 850Z M1165 845 L1220 865 L1210 880 L1160 865Z M1205 920 L1260 940 L1250 965 L1200 945Z M1190 955 L1240 980 L1230 1000 L1185 980Z M1280 1000 L1350 1035 L1345 1060 L1270 1025Z M1060 1150 L1095 1085 L1130 1110 L1090 1180Z M1250 1070 L1295 1090 L1280 1115 L1240 1095Z M1090 1200 L1120 1150 L1140 1165 L1110 1225Z",
  "M985 1180 L1025 1205 L1010 1230 L975 1210Z M930 1225 L980 1245 L965 1270 L920 1250Z M1040 1250 L1065 1230 L1095 1260 L1060 1290Z M915 1320 L950 1340 L940 1360 L910 1345Z M1010 1310 L1065 1345 L1050 1370 L1000 1350Z M1185 1260 L1245 1290 L1235 1315 L1175 1280Z M1285 1270 L1300 1235 L1320 1245 L1305 1280Z M1090 1320 L1125 1335 L1110 1370 L1085 1350Z M650 1410 L680 1405 L700 1450 L760 1470 L750 1500 H655Z M1310 1370 L1345 1365 V1410 L1300 1415Z",
  "M170 1265 L200 1270 L198 1365 H168Z M85 1275 H125 L130 1330 L90 1325Z M105 1340 L130 1345 L135 1425 L110 1428Z M925 1430 L980 1450 L965 1480 L920 1460Z",
  "M1435 842 L1690 870 L1680 890 L1650 895 L1538 890 V925 H1500 V885 L1450 878Z M1415 900 L1445 930 L1425 985 L1460 1005 L1450 1030 L1375 1010Z M1530 1000 L1650 950 L1660 970 L1550 1030Z M1650 940 L1680 925 L1720 965 L1750 950 L1775 975 L1690 1030Z M1880 1080 L1960 1010 L1990 1055 L1920 1090 L1915 1130Z M2010 990 L2060 1055 L2045 1060 L2000 1000Z",
  "M1725 1185 L1745 1130 L1790 1175 L1780 1195 L1740 1215Z M1600 1260 L1650 1275 L1640 1310 L1620 1305Z M1425 1240 L1470 1245 V1265 L1420 1260Z M1405 1290 H1450 V1325 H1405Z M1455 1275 L1515 1280 V1325 H1455Z M1395 1360 H1425 V1500 H1390Z M1440 1360 H1500 V1415 H1440Z M1440 1425 H1495 V1500 H1435Z M1790 1110 L1830 1165 L1810 1170Z",
  "M2210 1370 L2290 1358 V1370 L2212 1384Z M2310 1365 L2390 1355 V1385 L2312 1390Z M2405 1350 L2495 1338 L2500 1360 L2440 1375 L2410 1378Z M2140 1375 L2255 1435 L2245 1450 L2135 1395Z",
];

type Road = { d: string; w: number };

const roads: Road[] = [
  { d: "M40 305 L470 155 L650 95 Q672 80 685 50", w: 26 },
  { d: "M440 50 L480 165 L545 300 L600 400", w: 26 },
  { d: "M655 95 Q675 165 720 180 L910 200 L1320 240 L1445 243", w: 26 },
  { d: "M920 50 L908 195", w: 24 },
  { d: "M1093 50 L1080 215 L1065 430", w: 24 },
  { d: "M1275 50 L1262 235", w: 24 },
  { d: "M1465 50 L1432 400 L1426 475", w: 24 },
  { d: "M1435 400 Q1455 435 1492 475", w: 20 },
  { d: "M40 402 L290 390 L600 388", w: 26 },
  { d: "M40 420 L290 418 L600 415 L780 425 L1280 462 L1500 480 L1760 502 L2100 528 L2300 540", w: 28 },
  { d: "M295 400 L272 520 Q250 680 150 840 L50 990", w: 38 },
  { d: "M508 537 L728 550 Q760 550 762 520 L765 440", w: 24 },
  { d: "M333 730 Q400 715 470 675 Q530 645 590 665 Q630 680 655 720 L700 790 Q770 900 770 1000 L762 1380", w: 26 },
  { d: "M50 745 L145 840", w: 24 },
  { d: "M75 980 Q75 1040 110 1110", w: 26 },
  { d: "M60 1070 L110 1110 M60 1230 L110 1180", w: 22 },
  { d: "M130 1150 L260 1180 L560 1325 L790 1430", w: 50 },
  { d: "M140 1190 L157 1510", w: 24 },
  { d: "M80 1230 Q85 1350 92 1510", w: 24 },
  { d: "M780 1372 Q850 1355 890 1390 L1020 1440 Q1060 1450 1120 1410 L1250 1350 Q1300 1335 1380 1335 L1535 1338", w: 26 },
  { d: "M885 1380 Q870 1440 810 1450", w: 24 },
  { d: "M885 1390 L900 1260 Q910 1150 960 1050 L1020 920 Q1080 840 1150 790 L1210 772", w: 28 },
  { d: "M800 975 L990 990 Q1040 1000 1100 1030 L1380 1185", w: 26 },
  { d: "M1187 870 L1102 1025", w: 22 },
  { d: "M1065 1175 L960 1370", w: 22 },
  { d: "M1020 1285 L1080 1320", w: 20 },
  { d: "M1028 1438 L1205 1100 L1260 995 L1335 895 Q1340 860 1315 825", w: 26 },
  { d: "M1325 800 L1235 738 Q1195 718 1203 765 L1320 830", w: 24 },
  { d: "M1350 790 Q1355 768 1375 768 L2140 818 Q2200 835 2250 890", w: 26 },
  { d: "M1330 806 L1785 845", w: 24 },
  { d: "M1787 812 Q1788 875 1745 892 L1600 935 L1513 975", w: 24 },
  { d: "M1355 1030 Q1440 1055 1440 1085 L1380 1200 Q1370 1250 1370 1340 L1368 1510", w: 26 },
  { d: "M1495 1510 L1535 1350 Q1545 1290 1600 1230 L1860 1060 Q2000 960 2180 905 L2250 892 L2610 882", w: 26 },
  { d: "M1545 1285 L1465 1160 Q1455 1135 1500 1100 L1560 1045 Q1640 1000 1665 1015 Q1705 1050 1692 1090 L1645 1150", w: 22 },
  { d: "M1605 1045 Q1600 1090 1660 1190", w: 22 },
  { d: "M1502 1110 L1550 1180 L1602 1230", w: 20 },
  { d: "M1790 962 L1935 1180", w: 24 },
  { d: "M2230 910 L1930 1180 L1780 1360 Q1740 1400 1600 1430 L1520 1510", w: 40 },
  { d: "M1782 1390 Q1765 1450 1815 1510 M1700 1440 L1790 1495", w: 24 },
  { d: "M2270 910 L2420 920 L2610 925", w: 22 },
  { d: "M2300 535 L2400 440 Q2430 385 2460 372 L2610 338", w: 26 },
  { d: "M2300 540 L2400 590 L2490 660", w: 22 },
  { d: "M2395 440 Q2365 510 2385 585 L2422 630 Q2430 690 2400 700", w: 22 },
  { d: "M2480 710 L2130 682 Q2060 670 2000 620 Q1970 580 1930 578 L1740 560 L1650 608 Q1560 620 1560 580 L1562 490", w: 26 },
  { d: "M1595 500 Q1650 540 1740 558 L1752 490 L1765 290", w: 26 },
  { d: "M1595 270 L1765 280", w: 24 },
  { d: "M1660 280 L1650 410", w: 24 },
  { d: "M1782 50 L1768 270", w: 24 },
  { d: "M2110 515 L2130 270 L2150 50", w: 24 },
  { d: "M1992 240 L2115 245", w: 24 },
  { d: "M2490 665 L2540 585 Q2565 555 2610 550", w: 24 },
  { d: "M2440 700 L2475 660", w: 20 },
  { d: "M1970 1490 L2140 1470 L2598 1400", w: 26 },
];

const rails = [
  "M60 480 Q300 555 740 605 L1320 650 L2010 705 L2598 750",
  "M60 512 Q300 580 640 622 L1320 690 L2000 748 L2598 790",
];

const highways: Road[] = [
  { d: "M2610 985 L2400 1005 Q2200 1035 2090 1140 L1970 1330 L1875 1520", w: 58 },
  { d: "M2610 1030 Q2370 1080 2190 1220 L2010 1400 L1930 1520", w: 56 },
  { d: "M2620 620 L2500 740 Q2400 860 2250 1060 L2060 1310 L1910 1520", w: 80 },
];

const arrows: [number, number, number][] = [
  [218, 740, -70], [880, 985, 182], [1270, 797, 30], [1335, 1170, 210], [918, 1185, -78], [1112, 1270, 117],
  [147, 1380, -92], [1570, 827, 4], [1980, 600, 34], [2540, 918, 2], [1503, 1455, 102],
];

function MapPicture() {
  return (
    <svg role="img" aria-label="Mapa de O Barro Vivo, Lisboa" viewBox="60 66 2538 1431" className="block w-full">
      <defs>
        <filter id="soft" x="-50%" y="-50%" width="200%" height="200%">
          <feGaussianBlur stdDeviation="18" />
        </filter>
        <path id="lbl-ven" d="M525 305 Q570 400 612 435 Q640 450 770 442 Q1000 468 1340 488" />
        <path id="lbl-est" d="M688 795 Q745 905 747 1050 L747 1290 Q752 1400 830 1560" />
        <path id="lbl-seg" d="M2195 1195 L2480 815 L2760 500" />
        <path id="lbl-tra" d="M2180 1490 Q2400 1480 2640 1395" />
      </defs>
      <rect x="60" y="66" width="2538" height="1431" fill="#f9f9f4" />
      <g fill="#c3e798">
        {parks.map((d) => (
          <path key={d} d={d} />
        ))}
      </g>
      <path d="M560 940 L735 950 L765 1400 L565 1305 V1060 L470 1055 L550 970Z" fill="#d8eca8" />
      <path d="M60 800 Q230 930 320 1180 L360 1275 L265 1310 L205 1200 Q130 1060 60 1000Z" fill="#dcd8cb" />
      <path d="M115 955 Q200 1040 250 1150" fill="none" stroke="#bfe296" strokeWidth="8" />
      <g fill="#fdf5e1">
        {creams.map((d) => (
          <path key={d} d={d} />
        ))}
      </g>
      <g fill="#f1e8d2">
        {tans.map((d) => (
          <path key={d} d={d} />
        ))}
      </g>
      <g fill="#ececea" fillRule="evenodd">
        {buildings.map((d) => (
          <path key={d} d={d} />
        ))}
      </g>
      <g fill="none" stroke="#cfcfd3">
        <path d="M268 1310 Q285 1400 262 1510 M370 1290 Q440 1410 570 1510" strokeWidth="26" />
        <path d="M2340 532 L2480 510 L2610 492 M2410 430 Q2420 490 2470 510" strokeWidth="28" />
      </g>
      <g fill="none" stroke="#b7bdc0" strokeLinejoin="round">
        {roads.map((r) => (
          <path key={r.d} d={r.d} strokeWidth={r.w + 4} />
        ))}
      </g>
      <circle cx="130" cy="1150" r="52" fill="#e2e7e9" stroke="#b7bdc0" strokeWidth="3" />
      <g fill="none" stroke="#e2e7e9" strokeLinejoin="round" strokeLinecap="round">
        {roads.map((r) => (
          <path key={r.d} d={r.d} strokeWidth={r.w - 2} />
        ))}
      </g>
      <circle cx="130" cy="1153" r="14" fill="#bfe296" stroke="#b7bdc0" strokeWidth="4" />
      <path
        d="M110 410 L560 404 M1560 1470 Q1600 1430 1740 1410 L1960 1170 L2200 940 Q2240 915 2280 905 M60 950 L120 880"
        fill="none"
        stroke="#b7bdc0"
        strokeWidth="3"
      />
      <g fill="none" stroke="#cccdce">
        {rails.map((d) => (
          <g key={d}>
            <path d={d} strokeWidth="9" />
            <path d={d} strokeWidth="26" strokeDasharray="5 47" />
          </g>
        ))}
      </g>
      <g fill="none" stroke="#f7f7f5" strokeWidth="18">
        <path d="M1398 637 L2017 686 M1393 681 L2016 727 M1389 723 L2012 766" />
      </g>
      <path d="M1836 630 L1928 638 L1922 675 L1836 668Z M1552 744 H1588 V766 H1550Z" fill="#f4f4f2" />
      <path d="M265 1310 L357 1277 L418 1500 H316Z" fill="#adb1b3" stroke="#8f9395" strokeWidth="4" />
      <path d="M308 1295 L368 1500" stroke="#8f9395" strokeWidth="3" />
      <g fill="none" stroke="#8f9395">
        {highways.map((r) => (
          <path key={r.d} d={r.d} strokeWidth={r.w + 6} />
        ))}
      </g>
      <g fill="none" stroke="#adb1b3">
        {highways.map((r) => (
          <path key={r.d} d={r.d} strokeWidth={r.w} />
        ))}
      </g>
      <path d="M1988 1320 Q2040 1200 2132 1130 Q2100 1190 1988 1320Z" fill="#f9f9f4" stroke="#8f9395" strokeWidth="3" />
      <g stroke="#b0b4b5" fill="#b0b4b5">
        {arrows.map(([x, y, a]) => (
          <g key={`${x}-${y}`} transform={`translate(${x} ${y}) rotate(${a})`}>
            <path d="M-42 0 H12" strokeWidth="9" />
            <path d="M10 -12 L40 0 L10 12Z" strokeWidth="2" />
          </g>
        ))}
      </g>
      <g
        className="font-['Inter']"
        fill="#333b55"
        stroke="#ffffff"
        strokeWidth="14"
        strokeLinejoin="round"
        paintOrder="stroke"
        fontSize="78"
      >
        <text><textPath href="#lbl-ven">RUA DA VENEZUELA</textPath></text>
        <text><textPath href="#lbl-est">ESTRADA DA BURA</textPath></text>
        <text transform="translate(1786 264) rotate(-86)">RUA A</text>
        <text transform="translate(2116 44) rotate(93)">REIRA</text>
        <text fontSize="92" fontWeight="700"><textPath href="#lbl-seg">SEGUNDA CIRC</textPath></text>
        <text><textPath href="#lbl-tra">TRAVESSA</textPath></text>
      </g>
      <ellipse cx="1440" cy="645" rx="75" ry="28" fill="#4f5a3c" opacity="0.6" transform="rotate(-15 1440 645)" filter="url(#soft)" />
      <path d="M1322 796 H1350 V806 H1322Z" fill="#333333" />
      <rect x="1329" y="600" width="14" height="202" fill="#a7a7a7" />
      <circle cx="1336" cy="545" r="60" fill="#ea4f3d" />
      <circle cx="1315" cy="524" r="14" fill="#ffffff" />
    </svg>
  );
}

function PinEmoji() {
  return (
    <svg role="img" aria-label="Alfinete" viewBox="0 0 64 56" className="inline-block h-[56px] w-[68px] align-[-8px]">
      <defs>
        <radialGradient id="pin-head" cx="0.52" cy="0.45" r="0.55">
          <stop offset="0" stopColor="#f49a86" />
          <stop offset="0.25" stopColor="#dd4c40" />
          <stop offset="0.8" stopColor="#c43a34" />
          <stop offset="1" stopColor="#a02a26" />
        </radialGradient>
        <linearGradient id="pin-needle" x1="0" x2="1" y1="0" y2="0">
          <stop offset="0" stopColor="#6d5f5a" />
          <stop offset="0.5" stopColor="#c9beb6" />
          <stop offset="1" stopColor="#7a6b66" />
        </linearGradient>
      </defs>
      <rect x="29" y="26" width="6" height="30" rx="2" fill="url(#pin-needle)" />
      <circle cx="32" cy="15" r="15" fill="url(#pin-head)" />
    </svg>
  );
}

function BellOffIcon() {
  return (
    <svg aria-label="Silencioso" role="img" viewBox="0 0 118 128" className="h-[43px] w-[39px]">
      <path
        d="M0 92 Q0 86 8 80 Q18 70 18 42 Q25 8 44 6 Q50 0 57 0 Q66 0 71 6 Q97 14 98 44 Q100 70 112 82 Q118 92 110 100 Q108 102 104 102 H8 Q0 102 0 92Z"
        fill="#000000"
      />
      <path d="M38 110 H78 Q72 127 58 127 Q44 127 38 110Z" fill="#000000" />
      <path d="M2 8 L118 120" stroke="#f3efea" strokeWidth="24" />
      <path d="M4 10 L114 119" stroke="#000000" strokeWidth="8" strokeLinecap="round" />
    </svg>
  );
}

function SignalIcon() {
  return (
    <svg role="img" aria-label="Sinal" viewBox="0 0 58 37" className="h-[37px] w-[58px]">
      <rect x="0" y="23" width="10" height="14" rx="3" />
      <rect x="16" y="16" width="10" height="21" rx="3" />
      <rect x="32" y="8" width="10" height="29" rx="3" />
      <rect x="48" y="0" width="10" height="37" rx="3" fill="#c3c0bb" />
    </svg>
  );
}

function TopBar() {
  return (
    <header className="relative z-10 bg-[#f3efea] pt-12 pb-[30px]">
      <div className="flex h-20 items-center justify-between pr-[98px] pl-[115px]">
        <div className="flex items-center gap-3">
          <span className="text-[49px] leading-none font-semibold text-black">09:45</span>
          <BellOffIcon />
        </div>
        <div className="flex items-center">
          <SignalIcon />
          <span className="ml-5 text-[42px] leading-none font-medium text-black">5G</span>
          <span className="relative ml-5 flex h-[41px] w-[75px] items-center justify-center overflow-hidden rounded-[14px] bg-[#a9a7a3]">
            <span className="absolute inset-y-0 left-0 w-[51px] bg-black" />
            <span className="relative text-[36px] leading-none font-bold text-[#f3efea]">68</span>
          </span>
          <span className="ml-[3px] h-3 w-1 rounded-r-full bg-[#a9a7a3]" />
        </div>
      </div>
      <div className="mt-[49px] flex items-center pl-12">
        <button
          type="button"
          aria-label="Voltar, 4 conversas"
          className="flex size-[132px] shrink-0 items-center justify-center gap-4 rounded-full border-[3px] border-white bg-[#fefbf6] shadow-[0_24px_110px_rgba(60,70,60,0.14)]"
        >
          <svg viewBox="0 0 33 57" className="h-[57px] w-[33px]" fill="none" stroke="#1c1814" strokeWidth="8" strokeLinecap="round" strokeLinejoin="round">
            <path d="M29 4 L4 28 L29 53" />
          </svg>
          <span className="text-[48px] leading-none text-[#1c1814]">4</span>
        </button>
        <span className="ml-[26px] flex size-[120px] shrink-0 items-center justify-center rounded-full border border-[#c3d3e4] bg-[#d6e6fb]">
          <svg aria-hidden="true" viewBox="0 0 114 120" className="h-[40px] w-[38px]" fill="#2860c4">
            <ellipse cx="57" cy="29" rx="28" ry="30" />
            <path d="M0 111 Q6 72 57 70 Q108 72 114 111 Q114 119 106 119 H8 Q0 119 0 111Z" />
          </svg>
        </span>
        <h1 className="ml-6 text-[49px] leading-none font-semibold text-[#0a0a0a]">+1 (555) 910-7362</h1>
      </div>
    </header>
  );
}

function LocationCard() {
  return (
    <a href="#mapa" className="block overflow-hidden rounded-[26px] bg-[#f4f4f4]">
      <MapPicture />
      <div className="h-[171px] px-[18px] pt-[35px]">
        <p className="text-[40px] leading-[50px] font-semibold text-[#333333]">O Barro Vivo</p>
        <p className="mt-1 text-[36px] leading-[50px] text-[#808080]">Lisboa</p>
      </div>
    </a>
  );
}

function ActionButton({ icon, children }: { icon: React.ReactNode; children: React.ReactNode }) {
  return (
    <button
      type="button"
      className="-mx-px flex h-[131px] items-center justify-center gap-7 border-t-[3px] border-[#e1e1e1] text-[43px] leading-none text-[#3c8558]"
    >
      {icon}
      {children}
    </button>
  );
}

function OpenIcon() {
  return (
    <svg aria-hidden="true" viewBox="0 0 48 48" className="size-12" fill="none" stroke="currentColor" strokeWidth="4">
      <rect x="2" y="2" width="44" height="44" rx="6" />
      <path d="M15 33 L32 16 M18 15 H33 V31" strokeLinecap="round" strokeLinejoin="round" />
    </svg>
  );
}

function PhoneIcon() {
  return (
    <svg aria-hidden="true" viewBox="0 0 51 52" className="h-[52px] w-[51px]" fill="none" stroke="currentColor" strokeWidth="4" strokeLinejoin="round">
      <path d="M9 3 Q13 0 16 5 L20 14 Q21 18 17 21 Q15 23 17 26 Q22 33 29 36 Q31 37 33 35 Q37 31 41 34 L47 38 Q51 41 48 45 Q43 52 33 49 Q14 42 5 24 Q-1 9 9 3Z" />
    </svg>
  );
}

function MessageBubble() {
  return (
    <article className="relative mr-[263px] ml-[50px] flex flex-col rounded-[36px] rounded-bl-[30px] bg-white shadow-[0_2px_2px_rgba(0,0,0,0.08)]">
      <svg aria-hidden="true" viewBox="0 0 50 60" className="absolute bottom-0 -left-[19px] h-[60px] w-[50px]">
        <path d="M19 0 Q19 36 1 56 Q-1 60 3 60 Q20 60 31 51 Q36 58 50 60 V0Z" fill="#ffffff" />
        <path d="M31 52 Q37 59 50 60 H10 Q24 59 31 52Z" fill="#f1ece4" />
      </svg>
      <div className="px-[10px] pt-[10px]">
        <LocationCard />
      </div>
      <div className="px-[29px] pt-[14px] text-[48px] leading-[66px] text-[#0a0a0a]">
        <p>
          Olá <strong className="font-semibold">José Silva</strong>! <PinEmoji />
        </p>
        <p>
          A sua encomenda{" "}
          <a href="#encomenda" className="font-semibold text-[#3c8558] underline decoration-[5px] underline-offset-[6px]">
            2837776
          </a>{" "}
          já está pronta para levantamento.
        </p>
        <p>
          <PinEmoji /> <strong className="font-semibold">O Barro Vivo</strong>
        </p>
        <p>Lisboa</p>
        <p>Aguardamos a sua visita!</p>
      </div>
      <footer className="flex h-[104px] items-center justify-between pr-[30px] pl-[29px]">
        <span className="text-[43px] leading-none text-[#666666]">Enviado via Shopkit</span>
        <time className="pt-6 text-[36px] leading-none text-[#666666]">09:45</time>
      </footer>
      <ActionButton icon={<OpenIcon />}>Ver Encomenda</ActionButton>
      <ActionButton icon={<PhoneIcon />}>Contactar Loja</ActionButton>
    </article>
  );
}

function Composer() {
  const stroke = {
    fill: "none",
    stroke: "#0a0a0a",
    strokeLinecap: "round" as const,
    strokeLinejoin: "round" as const,
  };
  return (
    <form className="relative flex h-[246px] items-start bg-[#f3efea] pt-[30px] pr-[51px] pl-10">
      <button type="button" aria-label="Anexar" className="flex h-[86px] items-center">
        <svg viewBox="0 0 60 60" className="size-[60px]" {...stroke} strokeWidth="6">
          <path d="M30 3 V57 M3 30 H57" />
        </svg>
      </button>
      <div className="ml-[41px] flex h-[90px] min-w-0 flex-1 items-center rounded-full border border-[#b8b6b2] bg-white pr-[34px] pl-9">
        <input type="text" aria-label="Mensagem" className="h-full min-w-0 flex-1 bg-transparent text-[43px] outline-none" />
        <button type="button" aria-label="Autocolantes">
          <svg viewBox="0 0 54 54" className="size-[54px]" {...stroke} strokeWidth="4">
            <path d="M24 52 Q2 54 2 30 V24 Q2 2 22 2 H32 Q52 2 52 22 V30 Q50 36 37 47 Q32 52 24 52Z" />
            <path d="M52 28 Q49 31 44 31 Q31 31 30 42 Q30 50 27 52" />
          </svg>
        </button>
      </div>
      <button type="button" aria-label="Câmara" className="ml-14 flex h-[86px] items-center">
        <svg viewBox="0 0 69 54" className="h-[54px] w-[69px]" {...stroke} strokeWidth="5">
          <path d="M7 9 H19 Q21 9 23 6 Q26 3 29 3 H40 Q43 3 46 6 Q48 9 50 9 H62 Q66 9 66 14 V47 Q66 51 62 51 H7 Q3 51 3 47 V14 Q3 9 7 9Z" />
          <circle cx="34" cy="30" r="13" />
          <circle cx="54" cy="19" r="3" fill="#0a0a0a" strokeWidth="1" />
        </svg>
      </button>
      <button type="button" aria-label="Gravar áudio" className="ml-[58px] flex h-[86px] items-center">
        <svg viewBox="0 0 48 69" className="h-[69px] w-[48px]" {...stroke} strokeWidth="5">
          <rect x="13" y="3" width="22" height="43" rx="11" />
          <path d="M3 36 Q5 56 24 57 Q43 56 45 36 M24 57 V66" />
        </svg>
      </button>
    </form>
  );
}

export default function App() {
  return (
    <div className="flex min-h-screen flex-col bg-[#f3efea] font-['Inter',sans-serif]">
      <TopBar />
      <main className="relative flex-1 overflow-hidden bg-[#f4f0ea] pb-[94px]">
        <Wallpaper />
        <div className="relative flex flex-col">
          <div className="mt-[103px] flex h-[57px] w-[228px] items-center justify-center self-center rounded-[20px] bg-white text-[38px] font-semibold text-[#0a0a0a] shadow-[0_1px_2px_rgba(0,0,0,0.12)]">
            Hoje
          </div>
          <button
            type="button"
            className="mx-[165px] mt-[42px] rounded-[24px] bg-[#dcf9ea] px-8 pt-[18px] pb-[21px] text-center text-[38px] leading-[54px] text-[#0a0a0a] shadow-[0_1px_2px_rgba(0,0,0,0.12)]"
          >
            Esta empresa usa um serviço seguro da Meta para gerir esta conversa. Toque para saber mais.
          </button>
          <div className="mt-10">
            <MessageBubble />
          </div>
        </div>
      </main>
      <Composer />
    </div>
  );
}
